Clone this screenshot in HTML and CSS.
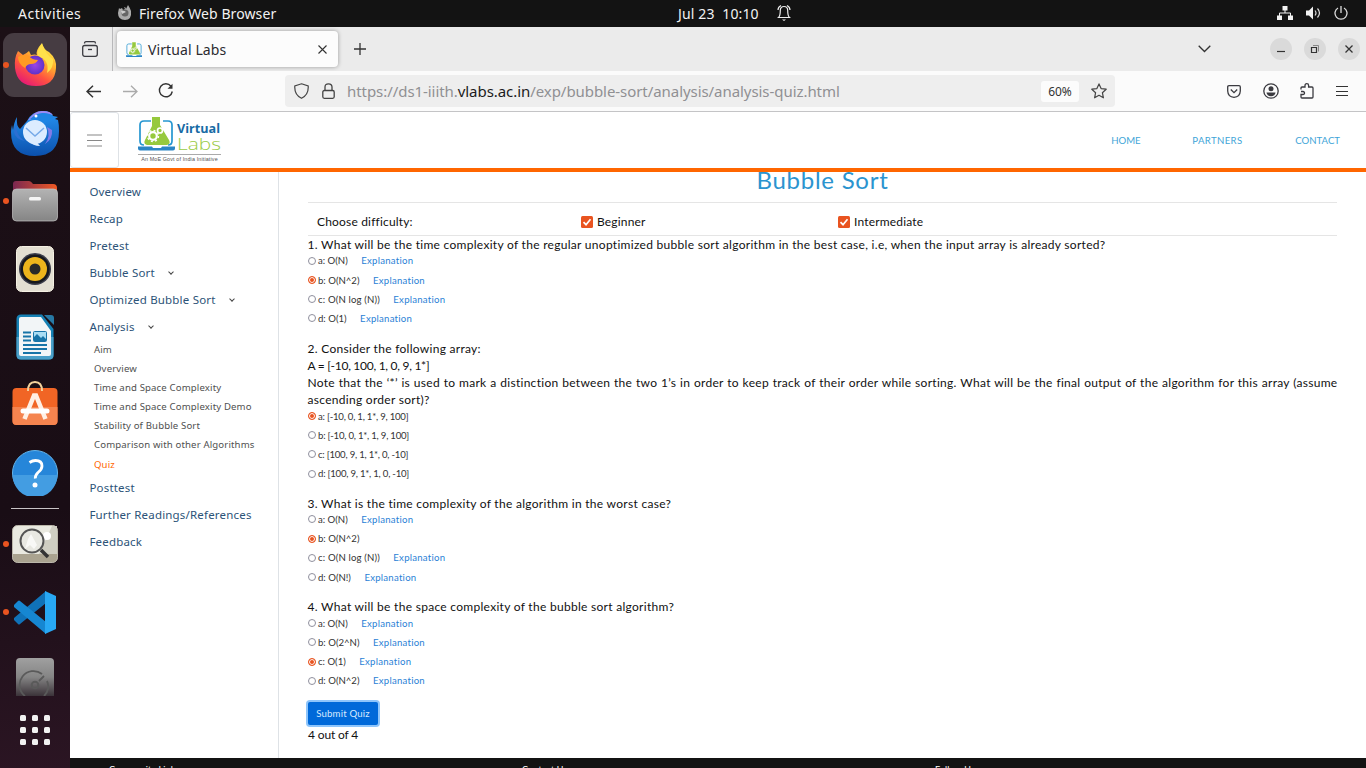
FILE: index.html
```html
<!DOCTYPE html>
<html lang="en">
<head>
<meta charset="utf-8">
<title>Virtual Labs</title>
<link rel="stylesheet" href="styles.css">
</head>
<body>
<div class="desktop">
  <header class="topbar">
    <span class="activities">Activities</span>
    <svg class="fx-mini" width="16" height="16" viewBox="0 0 16 16"><path d="M2 3l1 1 2-1 1 2 2-1-1-2q2 0 2 2l2-4q2 3 3 6 1 9-6 9-7 0-7-7z" fill="#aaa"/><circle cx="8" cy="8" r="3.5" fill="#666"/><path d="M4 6q3-1 5 1l-4 2z" fill="#ccc"/></svg>
    <span class="appname">Firefox Web Browser</span>
    <span class="clock">Jul 23&nbsp; 10:10</span>
    <svg class="bell" width="14" height="18" viewBox="0 0 14 18" fill="none" stroke="#eee" stroke-width="1.2"><path d="M1.500 13.500Q3.300 12 3.300 6.500 3.300 2.500 7 2.500t3.700 4q0 5.500 1.800 7zM1 6q0-3 3-4.500M13 6q0-3-3-4.500"/><path d="M5 15.500h4L7 17z" fill="#eee" stroke="none"/></svg>
    <div class="status">
      <svg width="16" height="14" viewBox="0 0 16 14"><path d="M5.500 0h5v4.500h-5zM0 9.500h5V14H0zM11 9.500h5V14h-5z" fill="#f2f2f2"/><path d="M8 4v3M2.500 10V7h11v3" fill="none" stroke="#f2f2f2"/></svg>
      <svg width="15" height="14" viewBox="0 0 15 14"><path d="M0 4.500h3L7 .5v13L3 9.500H0z" fill="#f2f2f2"/><path d="M9 4.500q2 2.500 0 5M11.500 2.500q4 4.500 0 9" fill="none" stroke="#ddd" stroke-width="1.200"/></svg>
      <svg width="14" height="14" viewBox="0 0 14 14" fill="none" stroke="#ddd" stroke-width="1.300"><path d="M4 2a6 6 0 1 0 6 0M7 0v7"/></svg>
    </div>
  </header>

  <aside class="dock">
    <div class="slot active run"><svg width="44" height="46" viewBox="0 0 44 46"><defs><linearGradient id="ff" x1=".8" y1="0" x2=".2" y2="1"><stop offset="0" stop-color="#fff44f"/><stop offset=".35" stop-color="#ffb22d"/><stop offset=".65" stop-color="#ff5340"/><stop offset="1" stop-color="#e2127d"/></linearGradient><radialGradient id="fp"><stop offset="0" stop-color="#9b45e5"/><stop offset="1" stop-color="#6032c8"/></radialGradient></defs><path d="M5 9l5 4q4-2 6-4l2 4q4-1 6 0-2-4 5-12 2 7 7 9 8 7 7 16-1 18-20 18-19 0-21-18Q1 16 5 9z" fill="url(#ff)"/><path d="M29 2q-6 7-4 12 12 4 9 17 7-5 6-14-7-4-11-15z" fill="#ffe04b"/><circle cx="22" cy="23" r="9.500" fill="url(#fp)"/><path d="M5 15q6-4 11-1 3 4 9 4-2 4-7 4-4 0-6 4-7-4-7-11z" fill="#ff9a24"/></svg></div>
    <div class="slot"><svg width="50" height="50" viewBox="0 0 50 50"><defs><linearGradient id="tb" x1="0" y1="0" x2="0" y2="1"><stop offset="0" stop-color="#2693f2"/><stop offset="1" stop-color="#0b50ad"/></linearGradient></defs><path d="M7 9q-1 9 3 12l7-8q5-10 16-10 8 0 10 5l5 1-3 2 3 1q1 4 1 11 0 25-24 25T1 24q0-3 1-7l1 5q1-8 4-13z" fill="url(#tb)"/><path d="M18 12Q25 2 33 3q7 0 10 4-11-3-18 4z" fill="#9b8af5"/><path d="M20 11Q27 4 34 5q6 0 10 4l-12 8z" fill="#1f85e4"/><path d="M37 19q4 9-2 17 8-5 7-14z" fill="#7f7be8"/><circle cx="25" cy="24" r="12" fill="#dcecff"/><path d="M16 20l9 8 9-8" fill="none" stroke="#76a9e8" stroke-width="1.500"/><path d="M18 33q5 5 12 5l-5-6z" fill="#dcecff"/><circle cx="26" cy="8" r="1.500" fill="#fff"/><path d="M7 12q-3 15 8 21-10-2-11-9" fill="#2c6fd2"/></svg></div>
    <div class="slot run"><svg width="46" height="42" viewBox="0 0 46 42"><defs><linearGradient id="fo"><stop offset="0" stop-color="#7b2851"/><stop offset="1" stop-color="#ef5924"/></linearGradient><linearGradient id="fg" x1="0" y1="0" x2="0" y2="1"><stop offset="0" stop-color="#b3b3b3"/><stop offset="1" stop-color="#858585"/></linearGradient></defs><path d="M1 13V4q0-3 3-3h13q2 0 4 3h20q4 0 4 4v8H1z" fill="url(#fo)"/><rect x=".5" y="9" width="45" height="32" rx="4" fill="url(#fg)" stroke="#c5c5c5" stroke-width=".7"/><rect x="17" y="17" width="12" height="3.500" rx="1.500" fill="#f5f5f5"/></svg></div>
    <div class="slot"><svg width="38" height="46" viewBox="0 0 38 46"><rect x=".5" y=".5" width="37" height="45" rx="5" fill="#e3dfd2" stroke="#f5f1e3"/><circle cx="19" cy="23" r="16" fill="#3a3c49"/><circle cx="19" cy="23" r="14.500" fill="#17191d"/><circle cx="19" cy="23" r="12" fill="#edb51c"/><circle cx="19" cy="23" r="5.500" fill="#292929"/></svg></div>
    <div class="slot"><svg width="38" height="46" viewBox="0 0 38 46"><path d="M5 .5h21L37.500 15v26q0 4.500-4.500 4.500H5Q.5 45.500.5 41V5Q.5.5 5 .5z" fill="#1580b4"/><path d="M.5 23h37v18q0 4.500-4.500 4.500H5Q.5 45.500.5 41z" fill="#4a9fc8"/><path d="M5 3h20l10 14v23q0 2-2 2H5q-2 0-2-2V5q0-2 2-2z" fill="#f2f5f7"/><path d="M28 1h7q3 0 3 3v7z" fill="#2779a5"/><path d="M7 18.500h8M7 22.500h8M7 26.500h8M7 31h24M7 35h24M7 39h18" stroke="#1774a8" stroke-width="2"/><rect x="17.500" y="17.500" width="13" height="10" rx="1" fill="#a9ddf4" stroke="#1774a8"/><path d="M18 27v-4l3-3 4 4 2-2 3 3v2z" fill="#1774a8"/></svg></div>
    <div class="slot store"><svg width="46" height="46" viewBox="0 0 46 46"><rect x=".5" y="8" width="45" height="37" rx="4" fill="#f16525"/><path d="M.5 27h45v14q0 4-4 4h-37q-4 0-4-4z" fill="#f5844f"/><path d="M16 11q0-9 7-9t7 9" fill="none" stroke="#f4d29c" stroke-width="2"/><path d="M12.500 39L22 15.500h2L33.500 39" fill="none" stroke="#fff0e5" stroke-width="4.500"/><path d="M11 31h24" stroke="#fff" stroke-width="5" stroke-linecap="round"/></svg></div>
    <div class="slot help"><svg width="46" height="46" viewBox="0 0 46 46"><circle cx="23" cy="23" r="22.500" fill="#2686d9" stroke="#65b5eb"/><path d="M.5 25h45a22.500 22.500 0 0 1-45 0z" fill="#439de2"/><path d="M17.500 12.500q3-2 6-2 6.500 0 6.500 5.500 0 3.500-4 6.500-3 3-2.700 6" fill="none" stroke="#fff" stroke-width="2.800"/><circle cx="23" cy="35" r="2.500" fill="#fff"/></svg></div>
    <div class="rule"></div>
    <div class="slot run"><svg width="46" height="38" viewBox="0 0 46 38"><rect x=".5" y=".5" width="45" height="37" rx="5" fill="#e9e9e0" stroke="#bbb7aa"/><path d="M27 29L40 1h5v28z" fill="#cfcec2"/><path d="M1 29h44v4q0 4-4 4H5q-4 0-4-4z" fill="#aaa390"/><circle cx="35" cy="11" r="4" fill="#fff"/><circle cx="20" cy="16" r="11.500" fill="#e8e8e2" stroke="#555" stroke-width="2"/><path d="M16 14l3-5 6 11-3 4-4-4-5 4z" fill="#fff" opacity=".7"/><path d="M29 25l7 7" stroke="#333" stroke-width="3.500"/></svg></div>
    <div class="slot run"><svg width="43" height="43" viewBox="0 0 43 43"><path d="M32 0v12L6 33q-1 1-2 0l-4-4v-2z" fill="#1072b8"/><path d="M32 43V31L6 10q-1-1-2 0l-4 4v2z" fill="#1687d2"/><path d="M31 0l11 5v33l-11 5z" fill="#28a8f4"/></svg></div>
    <div class="slot disk"><svg width="38" height="39" viewBox="0 0 38 39"><defs><linearGradient id="dk" x1="0" y1="0" x2="0" y2="1"><stop offset="0" stop-color="#a0a0a0"/><stop offset=".5" stop-color="#858585"/><stop offset="1" stop-color="#3b3339"/></linearGradient></defs><path d="M0 39V5q0-4 4-4h30q4 0 4 4v34z" fill="url(#dk)"/><path d="M9 39A13 13 0 1 1 26 17M31 24A13 13 0 0 1 28 39M23 24l5-5" fill="none" stroke="#5a5a5a" stroke-width="1.800"/><circle cx="19" cy="28" r="3.300" fill="none" stroke="#5a5a5a" stroke-width="2"/></svg></div>
    <svg class="apps" width="30" height="30" viewBox="0 0 30 30" fill="#f2f2f2"><rect width="6" height="6" rx="1.500"/><rect x="12" width="6" height="6" rx="1.500"/><rect x="24" width="6" height="6" rx="1.500"/><rect y="12" width="6" height="6" rx="1.500"/><rect x="12" y="12" width="6" height="6" rx="1.500"/><rect x="24" y="12" width="6" height="6" rx="1.500"/><rect y="24" width="6" height="6" rx="1.500"/><rect x="12" y="24" width="6" height="6" rx="1.500"/><rect x="24" y="24" width="6" height="6" rx="1.500"/></svg>
  </aside>

  <main class="browser">
    <div class="tabs">
      <div class="view"><svg width="16" height="16" viewBox="0 0 16 16" fill="none" stroke="#3b3b40" stroke-width="1.300"><path d="M2.500 2.500q0-1.800 1.500-1.800h8q1.500 0 1.500 1.800"/><rect x=".7" y="4.500" width="14.600" height="10.800" rx="2"/><path d="M6 8.500h4"/></svg></div>
      <div class="tab">
        <svg width="16" height="15" viewBox="0 0 36 33"><use href="#mark"/></svg>
        <span class="tabname">Virtual Labs</span>
        <svg class="x" width="9" height="9" viewBox="0 0 9 9"><path d="M.5.5l8 8M8.500.5l-8 8" stroke="#333" stroke-width="1.100"/></svg>
      </div>
      <svg class="plus" width="12" height="12" viewBox="0 0 12 12"><path d="M6 0v12M0 6h12" stroke="#333" stroke-width="1.300"/></svg>
      <svg class="chev" width="13" height="8" viewBox="0 0 13 8"><path d="M.7.7l5.800 5.800L12.300.7" fill="none" stroke="#333" stroke-width="1.300"/></svg>
      <div class="winbtns">
        <span><svg width="22" height="22"><path d="M7 13.500h8" stroke="#333" stroke-width="1.200"/></svg></span>
        <span><svg width="22" height="22" fill="none" stroke="#333"><path d="M9 7.500h5.500v6" stroke="#888"/><path d="M7.500 9.500h5v5h-5z" stroke-width="1.200"/></svg></span>
        <span><svg width="22" height="22"><path d="M7.500 7.500l7 7M14.500 7.500l-7 7" stroke="#333" stroke-width="1.300"/></svg></span>
      </div>
    </div>
    <div class="toolbar">
      <svg class="back" width="15" height="13" viewBox="0 0 15 13" fill="none" stroke="#333" stroke-width="1.500"><path d="M15 6.500H1M7 .7L1 6.500l6 5.800"/></svg>
      <svg class="fwd" width="15" height="13" viewBox="0 0 15 13" fill="none" stroke="#aaa" stroke-width="1.300"><path d="M0 6.500h14M8 .7l6 5.800-6 5.800"/></svg>
      <svg class="reload" width="16" height="16" viewBox="0 0 16 16"><path d="M13 3.200A6.500 6.500 0 1 0 14.300 8.500" fill="none" stroke="#333" stroke-width="1.400"/><path d="M14.500.8v5H9.500z" fill="#333"/></svg>
      <div class="urlbar">
        <svg width="15" height="16" viewBox="0 0 15 16" fill="none" stroke="#444" stroke-width="1.200"><path d="M7.500.8L14.200 3q.6 9-6.700 12.300Q.2 12 .8 3z"/></svg>
        <svg class="lock" width="13" height="16" viewBox="0 0 13 16" fill="none" stroke="#444" stroke-width="1.300"><rect x=".8" y="7.500" width="11.400" height="7.800" rx="1.500"/><path d="M3 7.500V4q0-3.200 3.500-3.200T10 4v3.500"/></svg>
        <span class="url">https://ds1-iiith.<b>vlabs.ac.in</b>/exp/bubble-sort/analysis/analysis-quiz.html</span>
        <span class="zoom">60%</span>
        <svg width="16" height="16" viewBox="0 0 16 16" fill="none" stroke="#444" stroke-width="1.200" stroke-linejoin="round"><path d="M8 .9l2.100 4.700 5.100.6-3.800 3.500 1 5.100L8 12.300l-4.400 2.500 1-5.100L.8 6.200l5.100-.6z"/></svg>
      </div>
      <div class="tools">
        <svg width="14" height="13" viewBox="0 0 14 13" fill="none" stroke="#3b3b40" stroke-width="1.300"><path d="M2 .7h10q1.300 0 1.300 1.300v4Q13 12 7 12.300 1 12 .7 6V2Q.7.7 2 .7z"/><path d="M3.800 4.500L7 7.700l3.200-3.200"/></svg>
        <svg width="16" height="16" viewBox="0 0 16 16"><circle cx="8" cy="8" r="7.200" fill="none" stroke="#3b3b40" stroke-width="1.300"/><circle cx="8" cy="5.800" r="2.500" fill="#3b3b40"/><path d="M3.500 9.500h9Q12 13.200 8 13.200T3.500 9.500z" fill="#3b3b40"/></svg>
        <svg width="14" height="16" viewBox="0 0 14 16" fill="none" stroke="#3b3b40" stroke-width="1.300"><path d="M1 6.500V5q0-1 1-1h3V2.500Q5 .7 6.800.7t1.800 1.800V4H12q1 0 1 1v9q0 1-1 1H2q-1 0-1-1v-2.500h2q1.500 0 1.500-1.500T3 8.500H1"/></svg>
        <svg width="12" height="11" viewBox="0 0 12 11"><path d="M0 .5h12M0 5.500h12M0 9.500h12" stroke="#333" stroke-width="1.200"/></svg>
      </div>
    </div>

    <div class="page">
      <div class="sitehead">
        <div class="burger"><svg width="15" height="13" viewBox="0 0 15 13"><path d="M0 1h15M0 6.500h15M0 12h15" stroke="#888" stroke-width="1.200"/></svg></div>
        <div class="logo">
          <svg width="84" height="36" viewBox="0 0 84 36"><g id="mark"><path d="M6 28Q2 28 2 24V8q0-4 4-4h7M25 4h5q4 0 4 4v16q0 4-4 4" fill="none" stroke="#2596d1" stroke-width="1.700"/><path d="M14 0h8v8l9 15q2 4-2 5H9q-4-1-2-5l7-14z" fill="#96c93d"/><circle cx="15" cy="19" r="3.800" fill="none" stroke="#fff" stroke-width="2.200"/><circle cx="15" cy="19" r="5.500" fill="none" stroke="#fff" stroke-width="1.400" stroke-dasharray="2 2.300"/><circle cx="22" cy="13.500" r="2.500" fill="none" stroke="#fff" stroke-width="1.700"/><path d="M0 29.500h14l1 1.500h8l1-1.500h13v2q0 2-2 2H2q-2 0-2-2z" fill="#2b85c5"/></g><text class="lv" x="39" y="16" textLength="43" lengthAdjust="spacingAndGlyphs">Virtual</text><text class="ll" x="39" y="33" textLength="44" lengthAdjust="spacingAndGlyphs">Labs</text></svg>
          <span class="tag">An MoE Govt of India Initiative</span>
        </div>
        <nav class="topnav"><span>HOME</span><span>PARTNERS</span><span>CONTACT</span></nav>
      </div>
      <div class="cols">
        <nav class="side">
          <a>Overview</a><a>Recap</a><a>Pretest</a>
          <a>Bubble Sort <i></i></a><a>Optimized Bubble Sort <i></i></a><a>Analysis <i></i></a>
          <div class="sub"><a>Aim</a><a>Overview</a><a>Time and Space Complexity</a><a>Time and Space Complexity Demo</a><a>Stability of Bubble Sort</a><a>Comparison with other Algorithms</a><a class="cur">Quiz</a></div>
          <a>Posttest</a><a>Further Readings/References</a><a>Feedback</a>
        </nav>
        <section class="content">
          <h1>Bubble Sort</h1>
          <div class="difficulty">
            <span class="choose">Choose difficulty:</span>
            <span class="check"><svg width="12" height="12" viewBox="0 0 12 12"><rect width="12" height="12" rx="1.500" fill="#e95420"/><path d="M2.500 6.200l2.500 2.500 4.500-5.500" fill="none" stroke="#fff" stroke-width="1.700"/></svg><em>Beginner</em></span>
            <span class="check"><svg width="12" height="12" viewBox="0 0 12 12"><rect width="12" height="12" rx="1.500" fill="#e95420"/><path d="M2.500 6.200l2.500 2.500 4.500-5.500" fill="none" stroke="#fff" stroke-width="1.700"/></svg><em>Intermediate</em></span>
          </div>
          <div class="q"><p>1. What will be the time complexity of the regular unoptimized bubble sort algorithm in the best case, i.e, when the input array is already sorted?</p>
            <ul><li><u></u>a: O(N)<a>Explanation</a></li><li><u class="on"></u>b: O(N^2)<a>Explanation</a></li><li class="log"><u></u>c: O(N log (N))<a>Explanation</a></li><li><u></u>d: O(1)<a>Explanation</a></li></ul></div>
          <div class="q"><p>2. Consider the following array:</p><p class="array">A = [-10, 100, 1, 0, 9, 1*]</p><p class="full">Note that the ‘*’ is used to mark a distinction between the two 1’s in order to keep track of their order while sorting. What will be the final output of the algorithm for this array (assume</p><p>ascending order sort)?</p>
            <ul class="arrays"><li><u class="on"></u>a: [-10, 0, 1, 1*, 9, 100]</li><li><u></u>b: [-10, 0, 1*, 1, 9, 100]</li><li><u></u>c: [100, 9, 1, 1*, 0, -10]</li><li><u></u>d: [100, 9, 1*, 1, 0, -10]</li></ul></div>
          <div class="q"><p>3. What is the time complexity of the algorithm in the worst case?</p>
            <ul><li><u></u>a: O(N)<a>Explanation</a></li><li><u class="on"></u>b: O(N^2)</li><li class="log"><u></u>c: O(N log (N))<a>Explanation</a></li><li><u></u>d: O(N!)<a>Explanation</a></li></ul></div>
          <div class="q"><p>4. What will be the space complexity of the bubble sort algorithm?</p>
            <ul><li><u></u>a: O(N)<a>Explanation</a></li><li><u></u>b: O(2^N)<a>Explanation</a></li><li><u class="on"></u>c: O(1)<a>Explanation</a></li><li><u></u>d: O(N^2)<a>Explanation</a></li></ul></div>
          <button class="submit">Submit Quiz</button>
          <div class="score">4 out of 4</div>
        </section>
      </div>
      <footer class="foot"><span>Community Links</span><span>Contact Us</span><span>Follow Us</span></footer>
    </div>
  </main>
</div>
</body>
</html>
```
FILE: styles.css
```css
* { box-sizing: border-box; }
body { margin: 0; width: 1366px; height: 768px; overflow: hidden; font-family: "Noto Sans", "Open Sans", sans-serif; }
svg { display: block; flex: none; }
.desktop { display: grid; grid-template: 27px 741px / 70px 1296px; }
.topbar { grid-column: 1 / 3; background: #131313; color: #f2f2f2; display: flex; align-items: center; font-size: 14px; white-space: nowrap; padding-bottom: 1px; }
.activities { width: 100px; padding-left: 18px; letter-spacing: .5px; }
.fx-mini { margin-left: 17px; }
.appname { margin-left: 6px; width: 539px; letter-spacing: .1px; }
.clock { width: 99px; letter-spacing: .15px; }
.status { margin-left: 486px; display: flex; gap: 13px; align-items: center; }

.dock { background: linear-gradient(175deg, #1c1016 0, #190d15 65%, #2b1523); display: flex; flex-direction: column; padding-top: 6px; align-items: center; }
.slot { width: 64px; height: 68px; flex: none; display: flex; align-items: center; justify-content: center; position: relative; }
.slot.active { height: 64px; margin-bottom: 2px; background: #463c42; border-radius: 11px; }
.slot.store { padding-bottom: 4px; }
.run::before { content: ""; position: absolute; left: 0; top: calc(50% - 3px); width: 6px; height: 6px; border-radius: 50%; background: #e95420; }
.rule { width: 48px; height: 1px; background: #c8c4c6; flex: none; margin: 1px 0; }
.disk { height: 50px; align-items: flex-end; }
.apps { margin-top: 19px; }

.browser { display: grid; grid-template-rows: 44px 41px 656px; }
.tabs { background: #ebebeb; display: flex; align-items: center; }
.view { width: 43px; height: 44px; border-right: 1px solid #b9b9bb; display: flex; align-items: center; padding-left: 12px; }
.tab { margin-left: 4px; width: 221px; height: 36px; border-radius: 4px; background: #fcfcfc; box-shadow: 0 0 4px rgba(0,0,0,.35); display: flex; align-items: center; padding-left: 9px; }
.tabname { margin-left: 6px; width: 170px; font-size: 14px; color: #2b2b30; letter-spacing: .1px; }
.plus { margin-left: 16px; }
.chev { margin-left: 832px; }
.winbtns { display: flex; gap: 12px; margin-left: 59px; }
.winbtns span { width: 22px; height: 22px; border-radius: 50%; background: #dadada; }
.toolbar { background: #fbfbfb; border-bottom: 1px solid #c4c4c6; display: flex; align-items: center; }
.back { margin-left: 16px; }
.fwd { margin-left: 22px; }
.reload { margin-left: 20px; }
.urlbar { margin-left: 111px; width: 830px; height: 32px; border-radius: 4px; background: #eee; display: flex; align-items: center; padding-left: 9px; }
.lock { margin-left: 13px; }
.url { margin-left: 12px; width: 694px; font-size: 15px; letter-spacing: -.06px; color: #909093; white-space: nowrap; }
.url b { font-weight: 400; color: #1b1b20; }
.zoom { width: 38px; height: 21px; margin-right: 12px; background: #fcfcfc; border-radius: 3px; font-size: 12px; line-height: 21px; text-align: center; color: #333; flex: none; }
.tools { margin-left: 112px; display: flex; gap: 21.500px; align-items: center; }

.page { background: #fff; display: flex; flex-direction: column; overflow: hidden; }
.sitehead { height: 60px; flex: none; border-bottom: 4px solid #f60; display: flex; align-items: center; }
.burger { width: 49px; height: 56px; border: 1px solid #dee2e6; border-radius: 3px; display: flex; align-items: center; padding-left: 16px; }
.logo { margin: 0 0 0 19px; width: 84px; }
.lv { font: bold 13px "Open Sans", sans-serif; fill: #176ba5; }
.ll { font: 300 17px "Open Sans", sans-serif; fill: #9acb45; }
.tag { display: block; width: 83px; margin-top: 1px; border-top: 1px solid #aaa; padding-top: 1px; font: 5.400px/7px "Liberation Sans", sans-serif; color: #555; text-align: center; white-space: nowrap; letter-spacing: .13px; }
.topnav { margin-left: auto; padding-right: 26px; display: flex; font: 9.600px Lato, sans-serif; color: #3fa5d8; }
.topnav span:nth-child(1) { width: 81px; letter-spacing: -.1px; }
.topnav span:nth-child(2) { width: 103px; letter-spacing: .35px; }
.cols { height: 586px; flex: none; display: flex; }
.side { width: 209px; border-right: 1px solid #dee2e6; padding: 6px 0 0 19.400px; color: #2c5378; font: 11.500px/27px "Noto Sans", "Open Sans", sans-serif; white-space: nowrap; letter-spacing: .19px; }
.side a { display: block; height: 27px; }
.side i { display: inline-block; width: 4px; height: 4px; border: solid #444; border-width: 0 1px 1px 0; transform: rotate(45deg); margin: 0 0 3px 11px; }
.sub { padding: 0 0 0 4.600px; font-size: 9.600px; line-height: 19px; color: #505050; height: 133.500px; letter-spacing: .14px; }
.sub a { height: 19.100px; }
.sub .cur { color: #f60; }
.content { width: 1087px; padding: 0 29px; font: 12px/17px Lato, sans-serif; color: #111; white-space: nowrap; }
h1 { margin: 0; height: 30px; font: 24px/16px Lato, sans-serif; letter-spacing: .75px; color: #2b94cf; text-align: center; }
.difficulty { height: 34px; border-top: 1px solid #e5e5e5; border-bottom: 1px solid #e5e5e5; display: flex; align-items: center; padding: 5px 0 0 9px; letter-spacing: .18px; }
.choose { width: 264px; }
.check { display: flex; align-items: center; width: 257px; gap: 4px; }
em { font-style: normal; }
.q { margin-bottom: 13.800px; }
p { margin: 0 0 0 -.5px; height: 17px; letter-spacing: .29px; }
.array { letter-spacing: -.28px; }
.full { text-align-last: justify; margin-right: -.5px; }
ul { list-style: none; margin: 0; padding: .4px 0 0; display: grid; gap: 4.200px; height: 73px; font-size: 9.600px; line-height: 15px; color: #333; }
.arrays { letter-spacing: -.23px; padding-top: .8px; }
li { height: 15px; display: flex; align-items: center; }
li a { color: #2a7fd6; margin-left: 13.500px; letter-spacing: .24px; }
.log { letter-spacing: .15px; }
u { width: 8px; height: 8px; border: 1px solid #8f8f9d; border-radius: 50%; margin: 0 2px 0 0; flex: none; }
u.on { border-color: #e95420; background: #e95420; box-shadow: inset 0 0 0 1px #fff; }
.submit { display: block; margin: 7px 0 0; width: 70px; height: 23px; padding: 0; border: 0; border-radius: 2px; background: #0069d9; box-shadow: 0 0 0 2px #8ec5fb; color: #d7e9ff; font: 9.600px Lato, sans-serif; letter-spacing: .2px; }
.score { font-size: 12px; margin-top: 1px; letter-spacing: -.15px; }
.foot { height: 10px; background: #131313; color: #fff; display: flex; overflow: hidden; padding: 6px 0 0 39px; font: 9px/12px Lato, sans-serif; letter-spacing: .15px; }
.foot span { width: 413px; flex: none; }
```
